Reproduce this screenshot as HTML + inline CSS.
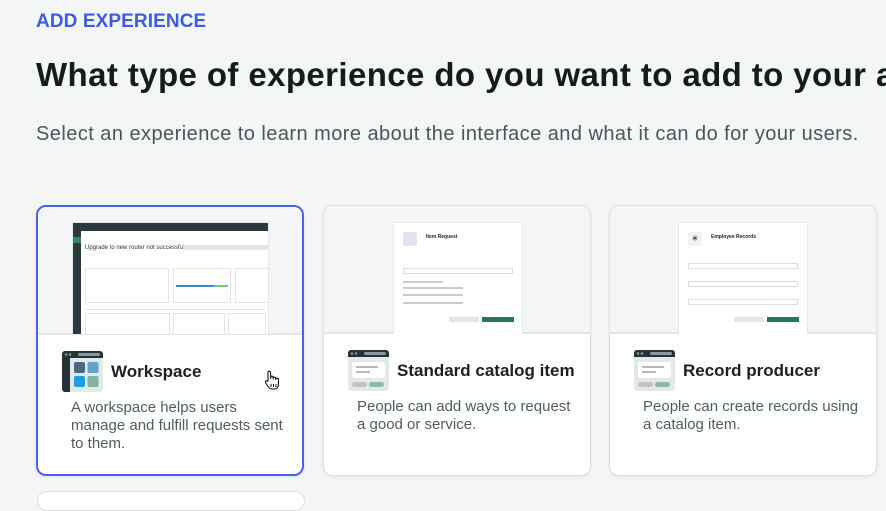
<!DOCTYPE html>
<html><head><meta charset="utf-8"><style>
*{box-sizing:border-box;margin:0;padding:0}
body{width:886px;height:495px;overflow:hidden;background:#f4f5f5;font-family:"Liberation Sans",sans-serif;position:relative}
.eyebrow{position:absolute;left:36px;top:11px;font-size:19px;font-weight:bold;color:#3d5ce0;letter-spacing:0.1px}
h1{position:absolute;left:36px;top:56px;font-size:33px;font-weight:bold;color:#161b1c;white-space:nowrap;letter-spacing:0.4px}
.sub{position:absolute;left:36px;top:123px;font-size:20px;color:#4a5659;white-space:nowrap;letter-spacing:0.45px}
.card{position:absolute;top:205px;width:268px;height:271px;background:#fff;border:1px solid #dcdfe0;border-radius:10px;overflow:hidden;box-shadow:0 1px 3px rgba(0,0,0,.08)}
.card.sel{border:2px solid #4a63e6}
.top{position:absolute;left:0;top:0;right:0;height:128px;background:#f4f5f5;border-bottom:2px solid #e3e6e6}
.prev{position:absolute;top:16px;height:112px;background:#fff;border:1px solid #e6e8e8;border-bottom:none}
.icon{position:absolute;left:24px;top:144px}
.title{position:absolute;left:73px;top:155px;font-size:17px;font-weight:bold;color:#1b2023}
.desc{position:absolute;left:33px;top:192px;font-size:15px;line-height:18px;color:#4f5d61;width:214px}
.bar{position:absolute;height:3px;background:#ccc}
</style></head><body>
<div class="eyebrow">ADD EXPERIENCE</div>
<h1>What type of experience do you want to add to your a</h1>
<div class="sub">Select an experience to learn more about the interface and what it can do for your users.</div>

<div class="card sel" style="left:36px">
 <div class="top">
  <div class="prev" style="left:34px;width:197px;top:15px">
   <div style="position:absolute;left:0;top:0;right:0;height:8px;background:#2c3a3d"></div>
   <div style="position:absolute;left:0;top:8px;width:8px;bottom:0;background:#2c3a3d"></div>
   <div style="position:absolute;left:0;top:14px;width:8px;height:6px;background:#2e8b6a"></div>
   <div style="position:absolute;left:12px;top:22px;font-size:6px;color:#333">Upgrade to new router not successful</div>
   <div style="position:absolute;left:110px;top:22px;width:85px;height:5px;background:#e2e4e6"></div>
   <div style="position:absolute;left:12px;top:45px;width:84px;height:35px;border:1px solid #e2e4e6"></div>
   <div style="position:absolute;left:100px;top:45px;width:58px;height:35px;border:1px solid #e2e4e6"></div>
   <div style="position:absolute;left:103px;top:62px;width:38px;height:2px;background:#3a86d4"></div>
   <div style="position:absolute;left:141px;top:62px;width:14px;height:2px;background:#7cc47f"></div>
   <div style="position:absolute;left:162px;top:45px;width:34px;height:35px;border:1px solid #e2e4e6"></div>
   <div style="position:absolute;left:12px;top:82px;width:180px;height:5px;border-bottom:1px solid #e2e4e6"></div>
   <div style="position:absolute;left:12px;top:90px;width:85px;height:22px;border:1px solid #e2e4e6"></div>
   <div style="position:absolute;left:100px;top:90px;width:52px;height:22px;border:1px solid #e2e4e6"></div>
   <div style="position:absolute;left:155px;top:90px;width:38px;height:22px;border:1px solid #e2e4e6"></div>
  </div>
 </div>
 <svg class="icon" width="41" height="41" viewBox="0 0 41 41">
  <rect x="0" y="0" width="41" height="41" rx="3" fill="#e4e8e9"/>
  <path d="M0 3a3 3 0 0 1 3-3h35a3 3 0 0 1 3 3v4H8v34H3a3 3 0 0 1-3-3z" fill="#243338"/>
  <circle cx="4" cy="3.5" r="1.3" fill="#8a979b"/><circle cx="8" cy="3.5" r="1.3" fill="#8a979b"/>
  <rect x="16" y="2" width="22" height="3" rx="1.5" fill="#8a979b"/>
  <rect x="12" y="11" width="11" height="11" rx="2" fill="#486a82"/>
  <rect x="25.5" y="11" width="11" height="11" rx="2" fill="#5fa4cc"/>
  <rect x="12" y="25" width="11" height="11" rx="2" fill="#1aa1e0"/>
  <rect x="25.5" y="25" width="11" height="11" rx="2" fill="#7fb59c"/>
 </svg>
 <div class="title">Workspace</div>
 <div class="desc">A workspace helps users manage and fulfill requests sent to them.</div>
 <svg style="position:absolute;left:226px;top:163px" width="16" height="20" viewBox="0 0 16 20"><path d="M4 11V2.5a1.3 1.3 0 0 1 2.6 0V9V7.5a1.3 1.3 0 0 1 2.6 0V9.5V8.5a1.3 1.3 0 0 1 2.6 0V10V9.5a1.3 1.3 0 0 1 2.6 0V15c0 2-1.5 4-4 4H8c-2 0-3-1-4-2.5L1.5 12.5a1.2 1.2 0 0 1 2-1.3z" fill="#fff" stroke="#111" stroke-width="1.1"/><path d="M7 14v3M9.5 14v3M12 14v3" stroke="#111" stroke-width="1"/></svg>
</div>

<div class="card" style="left:323px">
 <div class="top">
  <div class="prev" style="left:69px;width:130px;top:16px">
   <div style="position:absolute;left:9px;top:9px;width:14px;height:14px;background:#e6e0ef;border-radius:2px"></div>
   <div style="position:absolute;left:32px;top:11px;font-size:5px;font-weight:bold;color:#222">Item Request</div>
   <div class="bar" style="left:9px;top:45px;width:110px;height:6px;background:#fff;border:1px solid #ddd"></div>
   <div class="bar" style="left:9px;top:58px;width:40px;height:2px;background:#ccc"></div>
   <div class="bar" style="left:9px;top:64px;width:60px;height:2px;background:#ccc"></div>
   <div class="bar" style="left:9px;top:71px;width:60px;height:2px;background:#ccc"></div>
   <div class="bar" style="left:9px;top:79px;width:60px;height:2px;background:#ccc"></div>
   <div class="bar" style="left:55px;top:94px;width:30px;height:5px;background:#e4e6e7"></div>
   <div class="bar" style="left:88px;top:94px;width:32px;height:5px;background:#1f7a64"></div>
  </div>
 </div>
 <svg class="icon" width="41" height="41" viewBox="0 0 41 41">
  <rect width="41" height="41" rx="3" fill="#e4e8e9"/>
  <path d="M0 3a3 3 0 0 1 3-3h35a3 3 0 0 1 3 3v4H0z" fill="#243338"/>
  <circle cx="4" cy="3.5" r="1.3" fill="#8a979b"/><circle cx="8" cy="3.5" r="1.3" fill="#8a979b"/>
  <rect x="16" y="2" width="22" height="3" rx="1.5" fill="#8a979b"/>
  <rect x="4" y="12" width="33" height="16" rx="2" fill="#fff"/>
  <rect x="8" y="16" width="22" height="2" fill="#b4bbbd"/><rect x="8" y="21" width="14" height="2" fill="#b4bbbd"/>
  <rect x="4" y="32" width="15" height="5" rx="2.5" fill="#bfc4c6"/>
  <rect x="21" y="32" width="15" height="5" rx="2.5" fill="#85bea1"/>
 </svg>
 <div class="title">Standard catalog item</div>
 <div class="desc">People can add ways to request a good or service.</div>
</div>

<div class="card" style="left:609px">
 <div class="top">
  <div class="prev" style="left:68px;width:130px;top:16px">
   <div style="position:absolute;left:9px;top:9px;width:14px;height:14px;background:#eef3f6;border-radius:2px;font-size:8px;text-align:center;line-height:14px">✳</div>
   <div style="position:absolute;left:32px;top:11px;font-size:5px;font-weight:bold;color:#222">Employee Records</div>
   <div class="bar" style="left:9px;top:40px;width:110px;height:6px;background:#fff;border:1px solid #ddd"></div>
   <div class="bar" style="left:9px;top:58px;width:110px;height:6px;background:#fff;border:1px solid #ddd"></div>
   <div class="bar" style="left:9px;top:76px;width:110px;height:6px;background:#fff;border:1px solid #ddd"></div>
   <div class="bar" style="left:55px;top:94px;width:30px;height:5px;background:#e4e6e7"></div>
   <div class="bar" style="left:88px;top:94px;width:32px;height:5px;background:#1f7a64"></div>
  </div>
 </div>
 <svg class="icon" width="41" height="41" viewBox="0 0 41 41">
  <rect width="41" height="41" rx="3" fill="#e4e8e9"/>
  <path d="M0 3a3 3 0 0 1 3-3h35a3 3 0 0 1 3 3v4H0z" fill="#243338"/>
  <circle cx="4" cy="3.5" r="1.3" fill="#8a979b"/><circle cx="8" cy="3.5" r="1.3" fill="#8a979b"/>
  <rect x="16" y="2" width="22" height="3" rx="1.5" fill="#8a979b"/>
  <rect x="4" y="12" width="33" height="16" rx="2" fill="#fff"/>
  <rect x="8" y="16" width="22" height="2" fill="#b4bbbd"/><rect x="8" y="21" width="14" height="2" fill="#b4bbbd"/>
  <rect x="4" y="32" width="15" height="5" rx="2.5" fill="#bfc4c6"/>
  <rect x="21" y="32" width="15" height="5" rx="2.5" fill="#85bea1"/>
 </svg>
 <div class="title">Record producer</div>
 <div class="desc" style="width:220px">People can create records using<br>a catalog item.</div>
</div>
<div style="position:absolute;left:37px;top:491px;width:268px;height:20px;background:#fff;border:1px solid #dcdfe0;border-radius:10px"></div>
</body></html>
